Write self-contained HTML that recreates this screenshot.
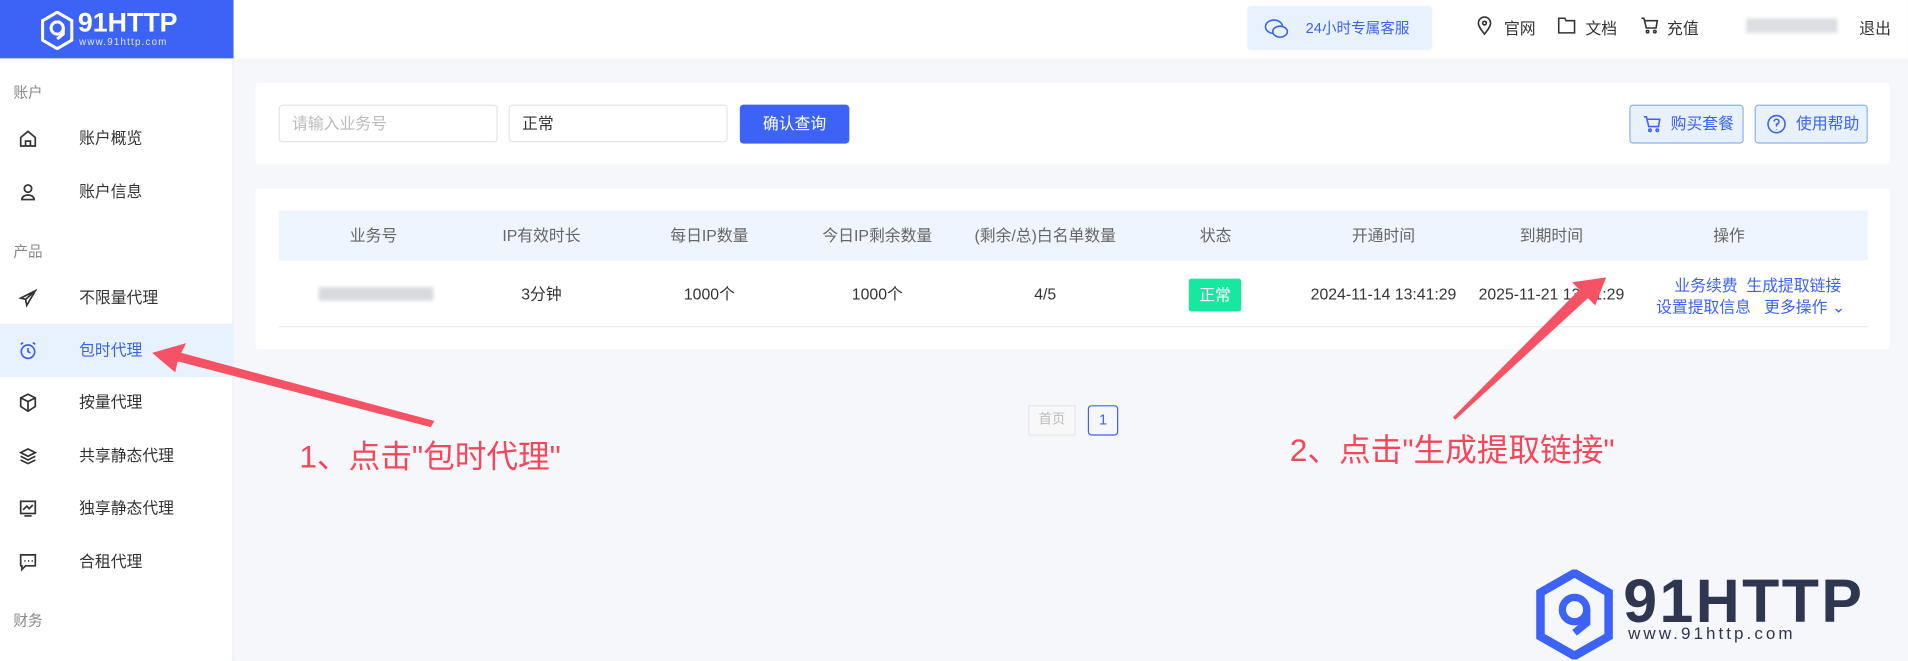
<!DOCTYPE html>
<html><head><meta charset="utf-8"><style>
*{margin:0;padding:0;box-sizing:border-box}
body{width:1908px;height:661px;overflow:hidden;background:#f5f7fb;font-family:"Liberation Sans","Noto Sans CJK SC",sans-serif}
#s{position:absolute;left:0;top:0;width:1568px;height:543px;transform:scale(1.2168);transform-origin:0 0;font-size:13px;color:#333}
.a{position:absolute}
.nav{position:absolute;left:0;width:192px;height:44px;line-height:44px}
.nav span{position:absolute;left:65px}
.nav svg{position:absolute;left:15px;top:14px}
.lbl{position:absolute;left:11px;color:#888;font-size:12px}
.th{position:absolute;top:173px;height:41px;line-height:41px;color:#666;text-align:center;width:140px}
.td{position:absolute;top:214px;height:55px;line-height:55px;text-align:center;width:140px;color:#333}
.btn2{position:absolute;top:86px;height:32px;line-height:30px;border:1px solid #8fb0f5;background:#e8f1fe;border-radius:3px;color:#3d62f0;font-size:13px}
.lk{color:#3d62f0}
</style></head><body><div id="s">
<div class="a" style="left:0;top:0;width:192px;height:48px;background:#3d63f6"></div>
<svg class="a" style="left:33px;top:9px" width="28" height="32" viewBox="0 0 28 32"><path d="M14 1 L26 8 V24 L14 31 L2 24 V8 Z" fill="none" stroke="#fff" stroke-width="2.5"/><circle cx="14" cy="14" r="5" fill="none" stroke="#fff" stroke-width="2.5"/><path d="M19 14 V19 L14 23" fill="none" stroke="#fff" stroke-width="2.5"/></svg>
<div class="a" style="left:64px;top:6px;color:#fff;font-size:22px;font-weight:bold;letter-spacing:0px">91HTTP</div>
<div class="a" style="left:65px;top:30px;color:#dfe6ff;font-size:8px;letter-spacing:1px">www.91http.com</div>
<div class="a" style="left:192px;top:0;width:1376px;height:48px;background:#fff"></div>
<div class="a" style="left:0;top:48px;width:192px;height:495px;background:#fff;border-right:1px solid #e8ebf0"></div>
<div class="lbl" style="top:67px">账户</div>
<div class="nav" style="top:92px"><svg width="16" height="16" viewBox="0 0 16 16" fill="none" stroke="#333" stroke-width="1.4"><path d="M2 7 L8 2 L14 7 V14 H2 Z M6 14 V10 H10 V14"/></svg><span>账户概览</span></div>
<div class="nav" style="top:136px"><svg width="16" height="16" viewBox="0 0 16 16" fill="none" stroke="#333" stroke-width="1.4"><circle cx="8" cy="5" r="3"/><path d="M3 14 C3 9 13 9 13 14 Z"/></svg><span>账户信息</span></div>
<div class="lbl" style="top:198px">产品</div>
<div class="nav" style="top:223px"><svg width="16" height="16" viewBox="0 0 16 16" fill="none" stroke="#333" stroke-width="1.4"><path d="M14 2 L2 8 L6 9 L7 14 Z M6 9 L14 2"/></svg><span>不限量代理</span></div>
<div class="nav" style="top:266px;background:#e8f2ff;color:#3d62f0"><svg width="16" height="16" viewBox="0 0 16 16" fill="none" stroke="#3d62f0" stroke-width="1.4"><circle cx="8" cy="9" r="5.5"/><path d="M8 6 V9 L10 10 M2 3 L4 1.5 M14 3 L12 1.5"/></svg><span>包时代理</span></div>
<div class="nav" style="top:309px"><svg width="16" height="16" viewBox="0 0 16 16" fill="none" stroke="#333" stroke-width="1.4"><path d="M8 1 L14 4 V11 L8 15 L2 11 V4 Z M2 4 L8 7 L14 4 M8 7 V15"/></svg><span>按量代理</span></div>
<div class="nav" style="top:353px"><svg width="16" height="16" viewBox="0 0 16 16" fill="none" stroke="#333" stroke-width="1.4"><path d="M8 2 L14 5 L8 8 L2 5 Z M2 8 L8 11 L14 8 M2 11 L8 14 L14 11"/></svg><span>共享静态代理</span></div>
<div class="nav" style="top:396px"><svg width="16" height="16" viewBox="0 0 16 16" fill="none" stroke="#333" stroke-width="1.4"><rect x="2" y="2" width="12" height="10"/><path d="M4 9 L7 6 L9 8 L12 5 M5 14 H11"/></svg><span>独享静态代理</span></div>
<div class="nav" style="top:440px"><svg width="16" height="16" viewBox="0 0 16 16" fill="none" stroke="#333" stroke-width="1.4"><path d="M2 2 H14 V11 H6 L3 14 V11 H2 Z"/><path d="M5 7 H6 M8 7 H9 M11 7 H12"/></svg><span>合租代理</span></div>
<div class="lbl" style="top:501px">财务</div>
<div class="a" style="left:1025px;top:5px;width:152px;height:36px;background:#e8f2ff;border-radius:3px;color:#3d62f0;line-height:36px;font-size:12px"><svg class="a" style="left:14px;top:10px" width="20" height="18" viewBox="0 0 20 18" fill="none" stroke="#3d62f0" stroke-width="1.3"><ellipse cx="8" cy="7" rx="7" ry="5.5"/><ellipse cx="13" cy="11" rx="6" ry="4.5" fill="#e8f2ff"/></svg><span style="position:absolute;left:48px">24小时专属客服</span></div>
<svg class="a" style="left:1214px;top:13px" width="12" height="16" viewBox="0 0 12 16" fill="none" stroke="#333" stroke-width="1.3"><path d="M6 15 C2 10 1 8 1 6 A5 5 0 0 1 11 6 C11 8 10 10 6 15 Z"/><circle cx="6" cy="6" r="1.5"/></svg>
<div class="a" style="left:1236px;top:13px">官网</div>
<svg class="a" style="left:1280px;top:14px" width="15" height="14" viewBox="0 0 15 14" fill="none" stroke="#333" stroke-width="1.3"><path d="M1 1 H6 L7 3 H14 V13 H1 Z"/></svg>
<div class="a" style="left:1303px;top:13px">文档</div>
<svg class="a" style="left:1348px;top:14px" width="15" height="14" viewBox="0 0 15 14" fill="none" stroke="#333" stroke-width="1.3"><path d="M1 1 H3 L5 9 H13 L14 3 H4"/><circle cx="6" cy="12" r="1"/><circle cx="12" cy="12" r="1"/></svg>
<div class="a" style="left:1370px;top:13px">充值</div>
<div class="a" style="left:1435px;top:15px;width:75px;height:12px;background:#dcdde2;filter:blur(1.5px)"></div>
<div class="a" style="left:1528px;top:13px">退出</div>
<div class="a" style="left:210px;top:68px;width:1343px;height:67px;background:#fff;border-radius:3px"></div>
<div class="a" style="left:229px;top:86px;width:180px;height:31px;border:1px solid #e2e4ea;border-radius:3px;color:#bbb;line-height:29px;padding-left:10px">请输入业务号</div>
<div class="a" style="left:418px;top:86px;width:180px;height:31px;border:1px solid #e2e4ea;border-radius:3px;line-height:29px;padding-left:10px">正常</div>
<div class="a" style="left:608px;top:86px;width:90px;height:32px;background:#3d63f6;border-radius:3px;color:#fff;line-height:32px;text-align:center">确认查询</div>
<div class="btn2" style="left:1339px;width:94px"><svg class="a" style="left:10px;top:8px" width="15" height="14" viewBox="0 0 15 14" fill="none" stroke="#3d62f0" stroke-width="1.3"><path d="M1 1 H3 L5 9 H13 L14 3 H4"/><circle cx="6" cy="12" r="1"/><circle cx="12" cy="12" r="1"/></svg><span style="position:absolute;left:33px">购买套餐</span></div>
<div class="btn2" style="left:1442px;width:93px"><svg class="a" style="left:9px;top:7px" width="16" height="16" viewBox="0 0 16 16" fill="none" stroke="#3d62f0" stroke-width="1.3"><circle cx="8" cy="8" r="7"/><path d="M6 6 A2 2 0 1 1 8 8 V10 M8 12 V12.5"/></svg><span style="position:absolute;left:33px">使用帮助</span></div>
<div class="a" style="left:210px;top:155px;width:1343px;height:132px;background:#fff;border-radius:3px"></div>
<div class="a" style="left:229px;top:173px;width:1306px;height:41px;background:#eef5fe"></div>
<div class="a" style="left:229px;top:268px;width:1306px;height:1px;background:#e8eaef"></div>
<div class="th" style="left:237px">业务号</div><div class="th" style="left:375px">IP有效时长</div><div class="th" style="left:513px">每日IP数量</div><div class="th" style="left:651px">今日IP剩余数量</div><div class="th" style="left:789px">(剩余/总)白名单数量</div><div class="th" style="left:929px">状态</div><div class="th" style="left:1067px">开通时间</div><div class="th" style="left:1205px">到期时间</div><div class="th" style="left:1351px">操作</div>
<div class="a" style="left:262px;top:236px;width:94px;height:11px;background:#d8d9de;filter:blur(1.5px)"></div>
<div class="td" style="left:375px">3分钟</div><div class="td" style="left:513px">1000个</div><div class="td" style="left:651px">1000个</div><div class="td" style="left:789px">4/5</div>
<div class="a" style="left:977px;top:229px;width:43px;height:27px;background:#17e8a0;color:#fff;line-height:27px;text-align:center;border-radius:2px">正常</div>
<div class="td" style="left:1067px">2024-11-14 13:41:29</div><div class="td" style="left:1205px">2025-11-21 13:41:29</div>
<div class="a lk" style="left:1376px;top:224px">业务续费&nbsp;&nbsp;生成提取链接</div>
<div class="a lk" style="left:1361px;top:242px">设置提取信息&nbsp;&nbsp;&nbsp;更多操作 ⌄</div>
<div class="a" style="left:845px;top:333px;width:39px;height:25px;border:1px solid #e4e6ea;background:#f8f8f9;color:#bbb;font-size:11px;line-height:23px;text-align:center">首页</div>
<div class="a" style="left:894px;top:333px;width:25px;height:25px;border:1px solid #3d62f0;border-radius:3px;color:#3d62f0;font-size:12px;line-height:23px;text-align:center">1</div>
<svg class="a" style="left:0;top:0" width="1568" height="543"><polygon points="125,290 153,282 149,290 357,346 354,351 146,297 144,306" fill="#f55266"/><polygon points="1320,228 1311,251 1305,245 1196,345 1194,343 1298,238 1292,232" fill="#f55266"/></svg>
<div class="a" style="left:246px;top:355px;color:#f5475a;font-size:26px">1、点击"包时代理"</div>
<div class="a" style="left:1060px;top:350px;color:#f5475a;font-size:26px">2、点击"生成提取链接"</div>
<svg class="a" style="left:1262px;top:468px" width="64" height="74" viewBox="0 0 64 74"><path d="M32 3 L60 19 V55 L32 71 L4 55 V19 Z" fill="none" stroke="#3d63f6" stroke-width="7"/><circle cx="32" cy="33" r="10" fill="none" stroke="#3d63f6" stroke-width="6"/><path d="M42 33 V44 L32 52" fill="none" stroke="#3d63f6" stroke-width="6"/></svg>
<div class="a" style="left:1334px;top:464px;color:#2e3650;font-size:50px;font-weight:bold;letter-spacing:2px;line-height:60px">91HTTP</div>
<div class="a" style="left:1338px;top:512px;color:#2e3650;font-size:14px;letter-spacing:2.5px">www.91http.com</div>
</div></body></html>
